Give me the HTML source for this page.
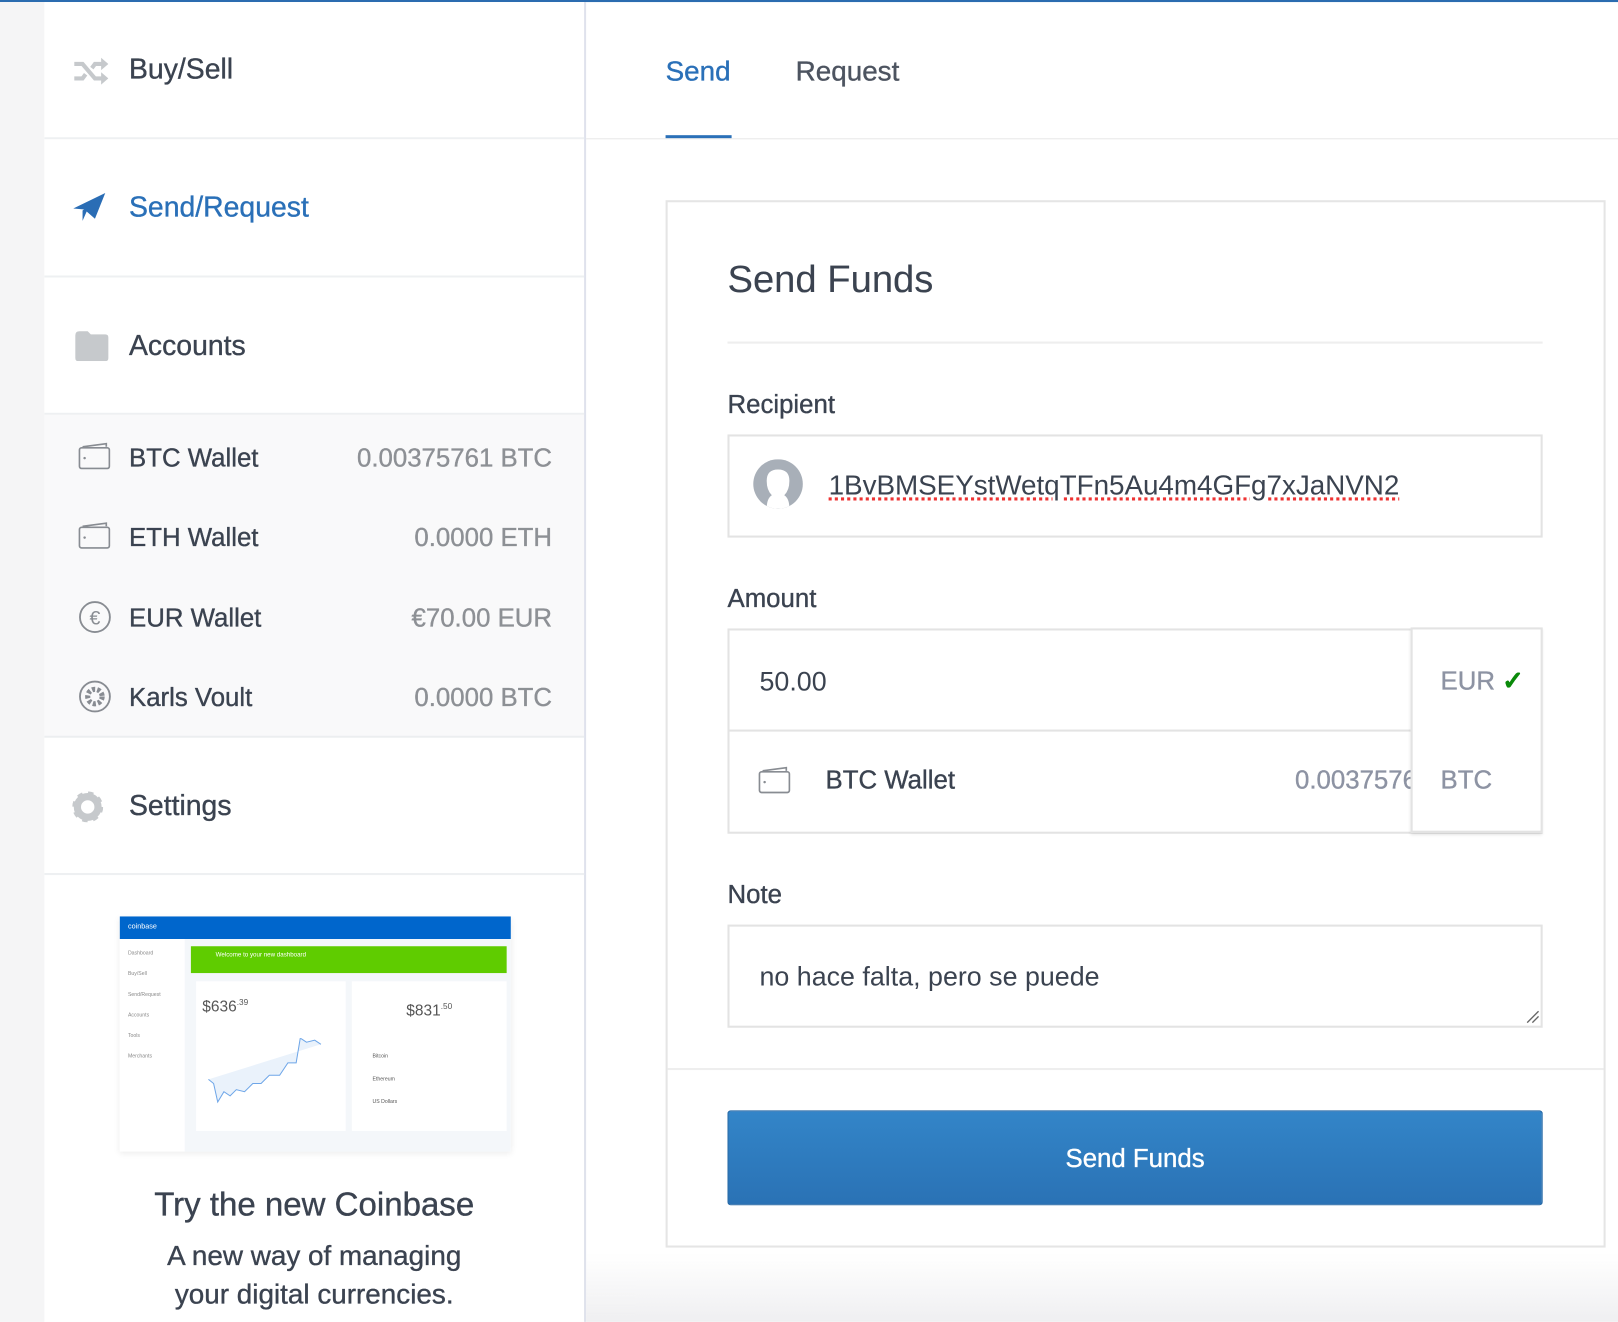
<!DOCTYPE html>
<html><head><meta charset="utf-8"><style>
html,body{margin:0;padding:0;width:1618px;height:1322px;overflow:hidden;background:#fff}
#w{position:absolute;left:0;top:0;width:1568px;height:1281px;transform:scale(1.03189);transform-origin:0 0;font-family:"Liberation Sans",sans-serif;color:#3b4350;-webkit-text-stroke:0.35px}
.a{position:absolute}
.nav{position:absolute;left:43px;width:523px;background:#fff;border-bottom:2px solid #eef0f2}
.nav span{position:absolute;left:82px;font-size:27.5px}
.row{position:absolute;left:0;width:523px;height:77px;font-size:25px}
.row .n{position:absolute;left:82px;top:26px}
.row .v{position:absolute;right:31px;top:26px;color:#8d9095}
.lbl{position:absolute;left:705px;font-size:25px;color:#3b4350}
.box{position:absolute;border:2px solid #e3e3e3;background:#fff;box-sizing:border-box}
</style></head><body><div id="w">
<div class="a" style="left:0;top:0;width:1568px;height:2px;background:#2b6cb0"></div>
<div class="a" style="left:0;top:2px;width:43px;height:1279px;background:#f5f5f6"></div>
<div class="a" style="left:566px;top:2px;width:2px;height:1279px;background:#dfe2ec"></div>

<div class="nav" style="top:2px;height:131px"><svg class="a" style="left:28px;top:53px" width="34" height="28" viewBox="0 0 34 28"><path d="M1 7h8l12 14h8M1 21h8l3-4M18 11l3-4h8" fill="none" stroke="#c6c9cc" stroke-width="4"/><path d="M27 1l7 6-7 6zM27 15l7 6-7 6z" fill="#c6c9cc"/></svg><span style="top:49px">Buy/Sell</span></div>
<div class="nav" style="top:135px;height:132px"><svg class="a" style="left:28px;top:51px" width="32" height="30" viewBox="0 0 32 30"><path d="M0 16L31 1 21 26 13 19 9 28 9 18 27 5 11 17z" fill="#2a6db5"/></svg><span style="top:50px;color:#2a70b8">Send/Request</span></div>
<div class="nav" style="top:269px;height:131px"><svg class="a" style="left:29px;top:51px" width="34" height="30"><path d="M1 5q0-4 4-4h8l3 3h14q3 0 3 3v20q0 3-3 3H4q-3 0-3-3z" fill="#c6c9cc"/></svg><span style="top:50px">Accounts</span></div>
<div class="a" style="left:43px;top:402px;width:523px;height:311px;background:#f9f9fa;border-bottom:2px solid #eceef0">
 <div class="row" style="top:2px"><svg class="a" style="left:33px;top:24px" width="31" height="28"><path d="M4 5L27 2v3" fill="none" stroke="#888c92" stroke-width="1.6"/><rect x="1" y="6" width="29" height="20" rx="2" fill="none" stroke="#888c92" stroke-width="1.6"/><circle cx="6" cy="16" r="1.2" fill="#888c92"/></svg><span class="n">BTC Wallet</span><span class="v">0.00375761 BTC</span></div>
 <div class="row" style="top:79px"><svg class="a" style="left:33px;top:24px" width="31" height="28"><path d="M4 5L27 2v3" fill="none" stroke="#888c92" stroke-width="1.6"/><rect x="1" y="6" width="29" height="20" rx="2" fill="none" stroke="#888c92" stroke-width="1.6"/><circle cx="6" cy="16" r="1.2" fill="#888c92"/></svg><span class="n">ETH Wallet</span><span class="v">0.0000 ETH</span></div>
 <div class="row" style="top:157px"><svg class="a" style="left:33px;top:23px" width="32" height="32"><circle cx="16" cy="16" r="14.5" fill="none" stroke="#888c92" stroke-width="1.8"/><text x="16" y="23" font-size="19" text-anchor="middle" fill="#888c92" font-family="Liberation Sans">€</text></svg><span class="n">EUR Wallet</span><span class="v">€70.00 EUR</span></div>
 <div class="row" style="top:234px"><svg class="a" style="left:33px;top:23px" width="32" height="32"><circle cx="16" cy="16" r="14.5" fill="none" stroke="#888c92" stroke-width="1.8"/><circle cx="16" cy="16" r="7" fill="none" stroke="#888c92" stroke-width="5" stroke-dasharray="3 2"/></svg><span class="n">Karls Voult</span><span class="v">0.0000 BTC</span></div>
</div>
<div class="nav" style="top:715px;height:131px"><svg class="a" style="left:27px;top:52px" width="30" height="30" viewBox="0 0 30 30"><circle cx="15" cy="15" r="10" fill="none" stroke="#c6c9cc" stroke-width="7" /><circle cx="15" cy="15" r="13" fill="none" stroke="#c6c9cc" stroke-width="4" stroke-dasharray="5 5.2"/></svg><span style="top:50px">Settings</span></div>

<!-- promo -->
<div class="a" style="left:116px;top:888px;width:379px;height:228px;background:#fff;box-shadow:0 2px 6px rgba(0,0,0,.08);overflow:hidden;-webkit-text-stroke:0">
 <div class="a" style="left:0;top:0;width:379px;height:22px;background:#0066cc;color:#fff;font-size:7px;line-height:22px;padding-left:8px">coinbase</div>
 <div class="a" style="left:0;top:22px;width:63px;height:206px;background:#fff;font-size:5px;color:#888;line-height:20px;padding:4px 8px;box-sizing:border-box">Dashboard<br>Buy/Sell<br>Send/Request<br>Accounts<br>Tools<br>Merchants</div>
 <div class="a" style="left:63px;top:22px;width:316px;height:206px;background:#f4f7fa"></div>
 <div class="a" style="left:69px;top:29px;width:306px;height:26px;background:#5fcc00;color:#fff;font-size:6px;padding:6px 24px;box-sizing:border-box">Welcome to your new dashboard</div>
 <div class="a" style="left:74px;top:63px;width:145px;height:145px;background:#fff;font-size:15px;color:#555"><div style="margin:16px 6px">$636<sup style="font-size:8px">.39</sup></div>
  <svg class="a" style="left:8px;top:55px" width="137" height="70"><path d="M4 40l5 4 4 18 6-10 6 4 6-6 8 2 8-8 8 0 8-8 10 0 8-12 8 0 4-24 6 4 8-2 6 4" fill="#eaf2fb" stroke="#6ea6e8" stroke-width="1"/></svg></div>
 <div class="a" style="left:225px;top:63px;width:150px;height:145px;background:#fff;font-size:15px;color:#555;text-align:center"><div style="margin-top:20px">$831<sup style="font-size:8px">.50</sup></div>
  <div style="text-align:left;font-size:5px;line-height:22px;margin:25px 0 0 20px">Bitcoin<br>Ethereum<br>US Dollars</div></div>
</div>
<div class="a" style="left:43px;top:1149px;width:523px;text-align:center;font-size:32px;color:#3b4350">Try the new Coinbase</div>
<div class="a" style="left:43px;top:1199px;width:523px;text-align:center;font-size:27px;line-height:37px;color:#3b4350">A new way of managing<br>your digital currencies.</div>

<!-- main -->
<div class="a" style="left:645px;top:54px;font-size:27px;color:#2a70b8">Send</div>
<div class="a" style="left:771px;top:54px;font-size:27px;color:#4d5460">Request</div>
<div class="a" style="left:645px;top:131px;width:64px;height:3px;background:#2a70b8"></div>
<div class="a" style="left:568px;top:134px;width:1000px;height:1px;background:#e8e8e8"></div>

<div class="box" style="left:645px;top:194px;width:911px;height:1015px;border-width:2px;border-color:#e5e5e5"></div>
<div class="a" style="left:705px;top:250px;font-size:37px;color:#3b4350;-webkit-text-stroke:0.1px">Send Funds</div>
<div class="a" style="left:705px;top:331px;width:790px;height:2px;background:#eeeeee"></div>

<div class="lbl" style="top:378px">Recipient</div>
<div class="box" style="left:705px;top:421px;width:790px;height:100px"></div>
<svg class="a" style="left:729px;top:445px" width="50" height="50"><defs><clipPath id="c"><circle cx="25" cy="24" r="24"/></clipPath></defs><circle cx="25" cy="24" r="24" fill="#a8afb8"/><g clip-path="url(#c)"><path d="M14 48q0-10 5-13q-5-5-5-14q0-11 11-11t11 11q0 9-5 14q5 3 5 13z" fill="#fff"/></g></svg>
<div class="a" style="left:803px;top:455px;font-size:27px;letter-spacing:-0.05px;color:#3b4350;-webkit-text-stroke:0;text-decoration:underline dotted #e33;text-underline-offset:3px;text-decoration-thickness:3px">1BvBMSEYstWetqTFn5Au4m4GFg7xJaNVN2</div>

<div class="lbl" style="top:566px">Amount</div>
<div class="box" style="left:705px;top:609px;width:790px;height:199px"></div>
<div class="a" style="left:705px;top:707px;width:664px;height:2px;background:#e3e3e3"></div>
<div class="a" style="left:736px;top:645px;font-size:26px;color:#3b4350;-webkit-text-stroke:0">50.00</div>
<svg class="a" style="left:735px;top:742px" width="32" height="28"><path d="M4 5L27 2v3" fill="none" stroke="#888c92" stroke-width="1.6"/><rect x="1" y="6" width="29" height="20" rx="2" fill="none" stroke="#888c92" stroke-width="1.6"/><circle cx="6" cy="16" r="1.2" fill="#888c92"/></svg>
<div class="a" style="left:800px;top:742px;font-size:25px;color:#3b4350">BTC Wallet</div>
<div class="a" style="left:1255px;top:742px;width:113px;overflow:hidden;white-space:nowrap;font-size:25px;color:#8d93a3">0.00375761</div>
<div class="box" style="left:1367px;top:608px;width:128px;height:199px;box-shadow:0 2px 3px rgba(0,0,0,.12)"></div>
<div class="a" style="left:1396px;top:645px;font-size:25px;color:#8d93a3">EUR <span style="color:#0a8a0a;font-weight:bold">✓</span></div>
<div class="a" style="left:1396px;top:742px;font-size:25px;color:#8d93a3">BTC</div>

<div class="lbl" style="top:853px">Note</div>
<div class="box" style="left:705px;top:896px;width:790px;height:100px"></div>
<div class="a" style="left:736px;top:931px;font-size:26px;color:#3b4350;-webkit-text-stroke:0">no hace falta, pero se puede</div>
<svg class="a" style="left:1478px;top:978px" width="14" height="14"><path d="M2 13L13 2M7 13L13 7" stroke="#666" stroke-width="1.3"/></svg>

<div class="a" style="left:647px;top:1035px;width:907px;height:2px;background:#eeeeee"></div>
<div class="a" style="left:705px;top:1076px;width:790px;height:92px;border-radius:3px;background:linear-gradient(#3385c8,#2a72b5);border:1px solid #2668a5;box-sizing:border-box;color:#fff;font-size:25px;text-align:center;line-height:92px">Send Funds</div>
<div class="a" style="left:568px;top:1215px;width:1000px;height:66px;background:linear-gradient(rgba(240,240,242,0),#efeff1)"></div>
</div></body></html>
